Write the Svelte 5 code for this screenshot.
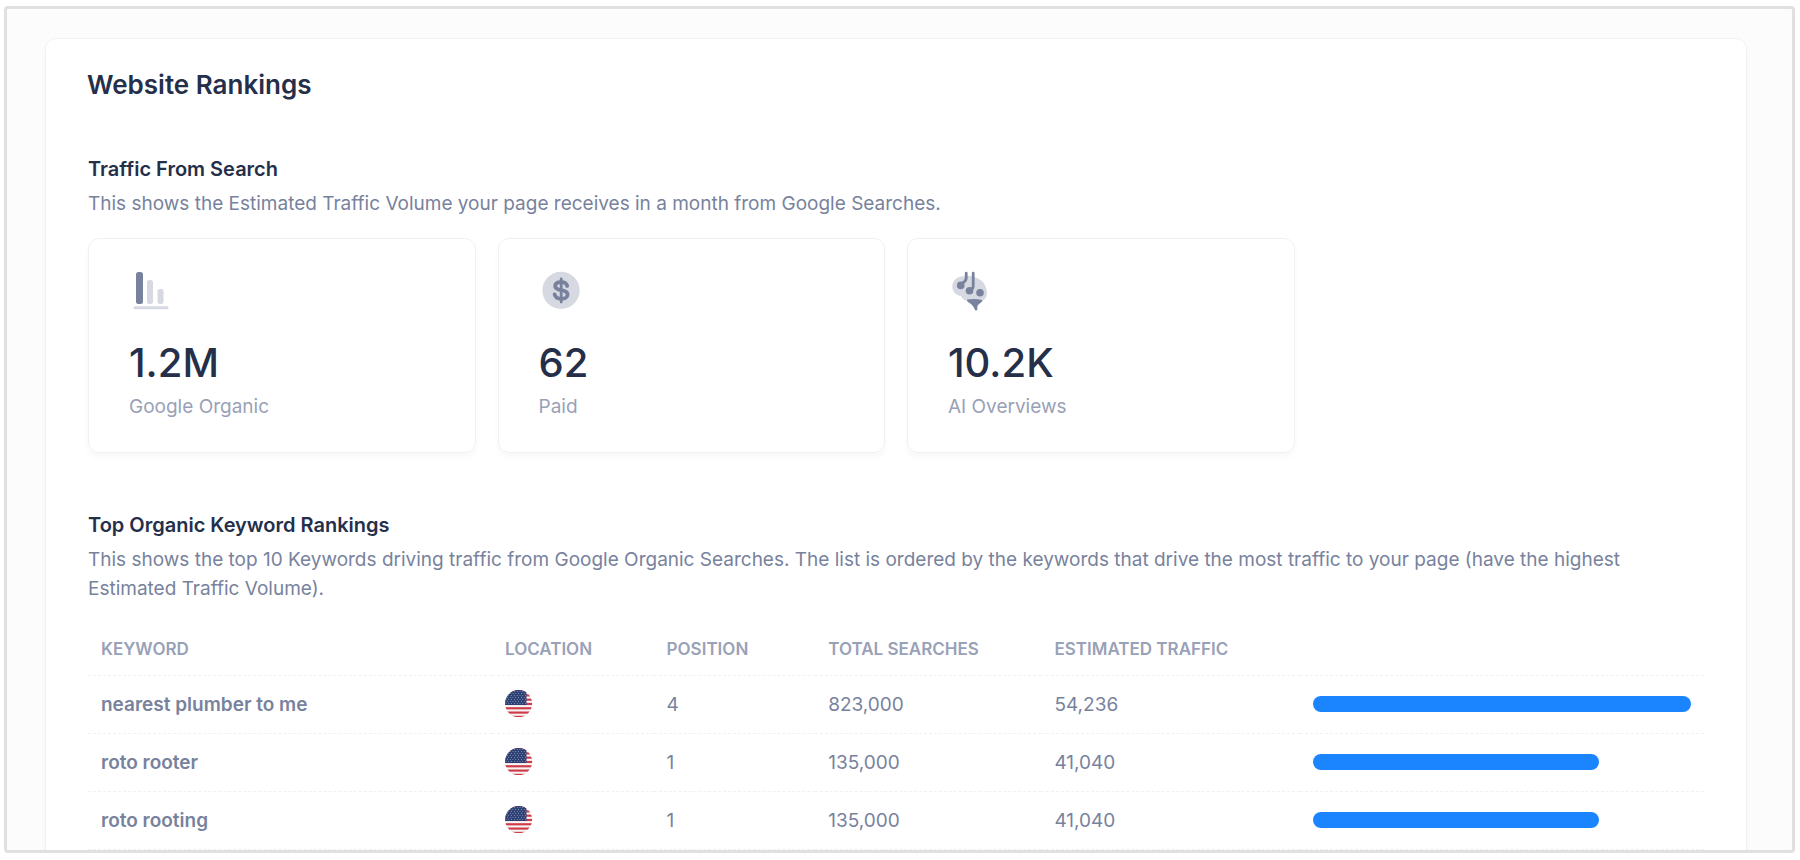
<script>
  const stats = [
    { icon: 'bars', value: '1.2M', label: 'Google Organic' },
    { icon: 'dollar', value: '62', label: 'Paid' },
    { icon: 'brain', value: '10.2K', label: 'AI Overviews' }
  ];

  const rows = [
    { keyword: 'nearest plumber to me', position: 4, searches: 823000, traffic: 54236 },
    { keyword: 'roto rooter', position: 1, searches: 135000, traffic: 41040 },
    { keyword: 'roto rooting', position: 1, searches: 135000, traffic: 41040 }
  ];

  const maxTraffic = Math.max(...rows.map((r) => r.traffic));
  const format = (n) => n.toLocaleString('en-US');

  const stars = [];
  for (let y = 0; y < 7; y++) {
    for (let x = 0; x < 8; x++) {
      stars.push({ x: 1 + x * 2.8 + (y % 2 ? 1.4 : 0), y: 1.3 + y * 2 });
    }
  }
</script>

<div class="page">
  <main class="frame">
    <section class="panel">
      <h1>Website Rankings</h1>

      <div class="block">
        <h2>Traffic From Search</h2>
        <p>This shows the Estimated Traffic Volume your page receives in a month from Google Searches.</p>
        <div class="stats">
          {#each stats as stat}
            <article class="stat">
              <svg class="icon" viewBox="0 0 44 44" aria-hidden="true">
                {#if stat.icon === 'bars'}
                  <rect x="7" y="4" width="7" height="32" rx="2.5" fill="#78829d" />
                  <rect x="18" y="12" width="6" height="24" rx="2.5" fill="#d7d9e2" />
                  <rect x="28.5" y="21" width="6" height="15" rx="2.5" fill="#d7d9e2" />
                  <rect x="4.5" y="38.2" width="35" height="3" rx="1.5" fill="#d7d9e2" />
                {:else if stat.icon === 'dollar'}
                  <circle cx="22" cy="22.4" r="18.6" fill="#d7d9e2" />
                  <path
                    d="M28.200 18C27.600 15.600 25.400 14.200 22.200 14.200c-3.700 0-6 1.500-6 4 0 5.400 12.400 2.600 12.400 8.200 0 2.800-2.700 4.400-6.300 4.400-3.600 0-6-1.600-6.700-4.400"
                    fill="none"
                    stroke="#78829d"
                    stroke-width="3.800"
                    stroke-linecap="round"
                  />
                  <path d="M22.200 11v23" fill="none" stroke="#78829d" stroke-width="2.800" stroke-linecap="round" />
                {:else}
                  <path
                    d="M4.300 18.500C4.300 12 9.500 8.400 16 8.300c3-.8 6.500-.6 9.600.4C33.500 10.500 39 17 39 25c0 3.800-1.500 6.300-4.600 7.700-4.500 1-9.400.9-14 .3-4-.1-6.500-1.800-7.300-4.900C8 27.500 4.300 23.500 4.300 18.500z"
                    fill="#d7d9e2"
                  />
                  <path
                    d="M18.200 5.200v5.300c0 2.500-2.300 3.600-5.200 6M25.200 5.200v13c0 2.500-1.200 3.400-3.700 5"
                    fill="none"
                    stroke="#78829d"
                    stroke-width="2.800"
                    stroke-linecap="round"
                  />
                  <circle cx="12.700" cy="17.400" r="3.800" fill="#78829d" />
                  <circle cx="21.500" cy="22.700" r="3.800" fill="#78829d" />
                  <circle cx="32" cy="24.700" r="3.800" fill="#78829d" />
                  <path
                    d="M19.200 31.600c4.500-1 10-.8 15 .3.500.8-.4 1.900-1.300 2.700-2.200 1.700-3.600 2.700-3.600 4.700V42.200h-2.200c-1.400-4-3.400-6.300-6.600-8-1.200-.6-2-1.700-1.300-2.600z"
                    fill="#78829d"
                  />
                {/if}
              </svg>
              <strong>{stat.value}</strong>
              <span>{stat.label}</span>
            </article>
          {/each}
        </div>
      </div>

      <div class="block">
        <h2>Top Organic Keyword Rankings</h2>
        <p>
          This shows the top 10 Keywords driving traffic from Google Organic Searches. The list is ordered by the
          keywords that drive the most traffic to your page (have the highest Estimated Traffic Volume).
        </p>
        <table>
          <colgroup>
            <col class="wide" />
            <col class="narrow" />
            <col class="narrow" />
            <col class="searches" />
            <col class="traffic" />
            <col class="wide" />
          </colgroup>
          <thead>
            <tr>
              <th>Keyword</th>
              <th>Location</th>
              <th>Position</th>
              <th>Total Searches</th>
              <th>Estimated Traffic</th>
              <th></th>
            </tr>
          </thead>
          <tbody>
            {#each rows as row, i}
              <tr>
                <td class="keyword">{row.keyword}</td>
                <td>
                  <svg class="flag" viewBox="0 0 28 28" role="img" aria-label="United States">
                    <clipPath id="flag-{i}"><circle cx="13.600" cy="13.600" r="13.500" /></clipPath>
                    <g clip-path="url(#flag-{i})">
                      <rect width="28" height="28" fill="#f5f5f5" />
                      {#each [0, 4.3, 8.6, 12.9, 17.2, 21.5, 25.8] as y}
                        <rect {y} width="28" height="2.150" fill="#d03a47" />
                      {/each}
                      <rect width="21.500" height="15" fill="#2b3f73" />
                      {#each stars as star}
                        <circle cx={star.x} cy={star.y} r="0.450" fill="#dfe4f0" />
                      {/each}
                    </g>
                  </svg>
                </td>
                <td>{row.position}</td>
                <td>{format(row.searches)}</td>
                <td>{format(row.traffic)}</td>
                <td><div class="bar" style="width: {(row.traffic / maxTraffic) * 100}%"></div></td>
              </tr>
            {/each}
          </tbody>
        </table>
      </div>
    </section>
  </main>
</div>

<style>
  :global(body) {
    background: #fff;
  }

  .page {
    box-sizing: border-box;
    height: 100vh;
    padding: 6px 5px 7px 4px;
    font-family: Inter, sans-serif;
    color: #252f4a;
  }

  .frame {
    box-sizing: border-box;
    height: 100%;
    overflow: hidden;
    padding: 29px 45px 0 38px;
    border: 3px solid #e0e0e0;
    border-radius: 4px;
    background: #fcfcfc;
  }

  .panel {
    padding: 24px 42px 40px 41px;
    border: 1px solid #f1f1f4;
    border-radius: 11px;
    background: #fff;
    box-shadow: 0 4px 6px rgba(0, 0, 0, 0.03);
  }

  h1 {
    margin: 0 0 47px;
    font-size: 26px;
    font-weight: 600;
    line-height: 44px;
  }

  h2 {
    margin: 0 0 5px;
    font-size: 20px;
    font-weight: 600;
    line-height: 30px;
  }

  p {
    margin: 0;
    font-size: 19px;
    font-weight: 400;
    line-height: 29px;
    color: #78829d;
  }

  .block {
    padding-left: 1px;
  }

  .block + .block {
    margin-top: 57px;
  }

  .stats {
    display: grid;
    grid-template-columns: repeat(4, 1fr);
    gap: 22px;
    margin-top: 20px;
  }

  .stat {
    display: flex;
    flex-direction: column;
    padding: 29px 40px 31px;
    border: 1px solid #f1f1f4;
    border-radius: 11px;
    box-shadow: 0 4px 6px rgba(0, 0, 0, 0.03);
  }

  .icon {
    width: 44px;
    height: 44px;
    margin-bottom: 27px;
  }

  .stat strong {
    font-size: 40px;
    font-weight: 500;
    line-height: 48px;
  }

  .stat span {
    margin-top: 5px;
    font-size: 19px;
    line-height: 29px;
    color: #99a1b7;
  }

  table {
    width: 100%;
    margin-top: 21px;
    border-collapse: collapse;
    table-layout: fixed;
  }

  .wide {
    width: 25%;
  }

  .narrow {
    width: 10%;
  }

  .searches {
    width: 14%;
  }

  .traffic {
    width: 16%;
  }

  th,
  td {
    box-sizing: border-box;
    padding: 0 13px;
    border-bottom: 1px dashed #f1f1f4;
    text-align: left;
  }

  th {
    height: 51px;
    font-size: 17px;
    font-weight: 600;
    text-transform: uppercase;
    color: #99a1b7;
  }

  td {
    height: 58px;
    font-size: 19px;
    color: #78829d;
  }

  .keyword {
    font-weight: 600;
  }

  .flag {
    display: block;
    width: 28px;
    height: 28px;
  }

  .bar {
    height: 16px;
    border-radius: 8px;
    background: #1b84ff;
  }
</style>
